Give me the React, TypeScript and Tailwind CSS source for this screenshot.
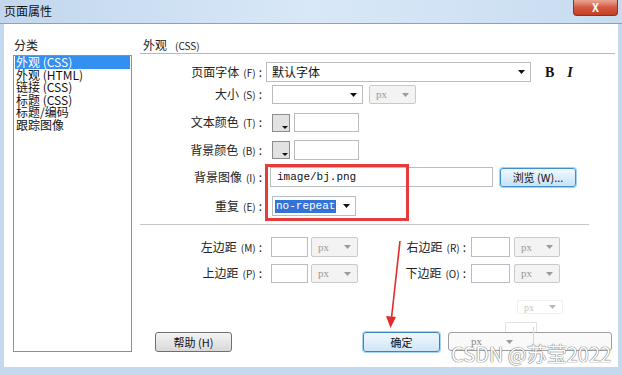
import React from 'react';

const Arrow = ({ muted }: { muted?: boolean }) => (
  <svg width="7" height="4" viewBox="0 0 7 4" className="shrink-0">
    <polygon points="0,0 7,0 3.5,4" fill={muted ? '#9a9a9a' : '#111'} />
  </svg>
);

const Label = ({ text, hint, className = 'w-[125px]' }: { text: string; hint: string; className?: string }) => (
  <div className={`${className} shrink-0 pr-[3px] text-right text-[12px] leading-[14px] text-[#222] whitespace-nowrap`}>
    {text}
    <span className="ml-[4px] text-[10px]">({hint})</span>
    <span className="ml-[3px]">:</span>
  </div>
);

const PxSelect = ({ className }: { className: string }) => (
  <div className={`${className} h-full shrink-0 flex items-center justify-between pl-[6px] pr-[6px] rounded-[2px] border border-[#c9c9c9] bg-[#f3f3f3]`}>
    <span className="[font-family:'Liberation_Serif',serif] text-[11px] text-[#9a9a9a]">px</span>
    <Arrow muted />
  </div>
);

const Input = ({ className, children }: { className: string; children?: React.ReactNode }) => (
  <div className={`${className} h-full shrink-0 border border-[#b9bcc1] bg-white flex items-center`}>{children}</div>
);

const Swatch = () => (
  <div className="ml-[7px] w-[18px] h-[18px] shrink-0 relative border border-[#8c8c8c] bg-[#e2e2e2]">
    <div className="absolute right-[1px] bottom-[2px] w-0 h-0 border-l-[3px] border-r-[3px] border-t-[3px] border-l-transparent border-r-transparent border-t-[#111]" />
  </div>
);

const categories = ['外观 (CSS)', '外观 (HTML)', '链接 (CSS)', '标题 (CSS)', '标题/编码', '跟踪图像'];

export default function App() {
  return (
    <div className="w-[622px] h-[375px] relative overflow-hidden flex flex-col bg-[#c5d9ee] [font-family:'Noto_Sans_CJK_SC',sans-serif]">
      {/* title bar */}
      <div className="h-[24px] shrink-0 flex justify-between border-b border-[#8aa2bb] bg-linear-to-r from-[#c2d7ed] via-[#d8e8f8] to-[#c8dcf0]">
        <div className="pl-[4px] pt-[4px] text-[12px] leading-[14px] text-[#111]">页面属性</div>
        <div className="mr-[4px] w-[45px] h-[16px] flex items-center justify-center rounded-b-[4px] border border-t-0 border-[#8e3024] bg-linear-to-b from-[#e9a596] via-[#d35a40] to-[#c43d24]">
          <span className="text-[11px] leading-[11px] font-bold text-white">X</span>
        </div>
      </div>

      {/* body */}
      <div className="flex-1 ml-[4px] mr-[4px] mb-[8px] bg-white flex">
        {/* categories */}
        <div className="pl-[9px] w-[136px] shrink-0 flex flex-col">
          <div className="pt-[14px] pl-[1px] text-[12px] leading-[14px] text-[#222]">分类</div>
          <div className="mt-[3px] w-[119px] h-[297px] border border-[#8d9196] px-[1px]">
            {categories.map((c, i) => (
              <div
                key={c}
                className={`h-[12.6px] pl-[1px] text-[12px] leading-[12.6px] whitespace-nowrap ${i === 0 ? 'bg-[#3390f0] text-white' : 'text-[#111]'}`}
              >
                {c}
              </div>
            ))}
          </div>
        </div>

        {/* form */}
        <div className="flex-1 flex flex-col pr-[3px]">
          <div className="h-[30px] shrink-0 pt-[14px] pl-[3px] border-b border-[#b7b7b7] text-[12px] leading-[14px] text-[#222]">
            外观<span className="ml-[8px] text-[10px]">(CSS)</span>
          </div>

          {/* page font */}
          <div className="mt-[8px] h-[20px] flex items-center">
            <Label text="页面字体" hint="F" />
            <div className="ml-[1px] w-[265px] h-full flex items-center justify-between pl-[5px] pr-[5px] border border-[#b9bcc1] bg-white">
              <span className="text-[12px] text-[#111]">默认字体</span>
              <Arrow />
            </div>
            <span className="ml-[14px] [font-family:'Liberation_Serif',serif] text-[14px] font-bold text-[#111]">B</span>
            <span className="ml-[13px] [font-family:'Liberation_Serif',serif] text-[14px] font-bold italic text-[#111]">I</span>
          </div>

          {/* size */}
          <div className="mt-[3px] h-[19px] flex items-center">
            <Label text="大小" hint="S" />
            <div className="ml-[7px] w-[91px] h-full flex items-center justify-end pr-[5px] border border-[#b9bcc1] bg-white">
              <Arrow />
            </div>
            <PxSelect className="ml-[6px] w-[47px]" />
          </div>

          {/* text colour */}
          <div className="mt-[9px] h-[19px] flex items-center">
            <Label text="文本颜色" hint="T" />
            <Swatch />
            <Input className="ml-[4px] w-[65px]" />
          </div>

          {/* background colour */}
          <div className="mt-[8px] h-[20px] flex items-center">
            <Label text="背景颜色" hint="B" />
            <Swatch />
            <Input className="ml-[4px] w-[65px]" />
          </div>

          {/* background image */}
          <div className="mt-[7px] h-[20px] flex items-center">
            <Label text="背景图像" hint="I" />
            <Input className="ml-[5px] w-[223px]">
              <span className="pl-[6px] [font-family:'Liberation_Mono',monospace] text-[11px] text-[#111]">image/bj.png</span>
            </Input>
            <div className="ml-[7px] w-[76px] h-[19px] flex items-center justify-center rounded-[3px] border border-[#3d8fd0] bg-linear-to-b from-[#f1f8fd] to-[#c6e2f7] shadow-[0_0_0_1px_#9fd3f5] text-[11px] text-[#111]">
              浏览 (W)...
            </div>
          </div>

          {/* repeat */}
          <div className="mt-[9px] h-[20px] flex items-center">
            <Label text="重复" hint="E" />
            <div className="ml-[7px] w-[84px] h-full flex items-center justify-between pl-[2px] pr-[5px] border border-[#b9bcc1] bg-white">
              <span className="bg-[#3373d6] px-[1px] [font-family:'Liberation_Mono',monospace] text-[11px] leading-[13px] text-white">no-repeat</span>
              <Arrow />
            </div>
          </div>

          <div className="mt-[8px] w-[449px] border-t border-[#c6c6c6]" />

          {/* left / right margin */}
          <div className="mt-[12px] h-[20px] flex items-center">
            <Label text="左边距" hint="M" />
            <Input className="ml-[6px] w-[37px]" />
            <PxSelect className="ml-[3px] w-[47px]" />
            <Label text="右边距" hint="R" className="ml-[43px] w-[68px]" />
            <Input className="ml-[2px] w-[39px]" />
            <PxSelect className="ml-[4px] w-[46px]" />
          </div>

          {/* top / bottom margin */}
          <div className="mt-[7px] h-[19px] flex items-center">
            <Label text="上边距" hint="P" />
            <Input className="ml-[6px] w-[37px]" />
            <PxSelect className="ml-[3px] w-[47px]" />
            <Label text="下边距" hint="O" className="ml-[43px] w-[68px]" />
            <Input className="ml-[2px] w-[39px]" />
            <PxSelect className="ml-[4px] w-[46px]" />
          </div>

          {/* buttons */}
          <div className="mt-[49px] h-[20px] flex items-center">
            <div className="ml-[15px] w-[77px] h-full flex items-center justify-center rounded-[3px] border border-[#707070] bg-linear-to-b from-[#f4f4f4] to-[#d9d9d9] text-[11px] text-[#111]">
              帮助 (H)
            </div>
            <div className="ml-[131px] w-[77px] h-full flex items-center justify-center rounded-[3px] border border-[#3c83c2] bg-linear-to-b from-[#f0f7fc] to-[#cfe6f7] shadow-[0_0_0_1px_#a6d6f4] text-[11px] text-[#111]">
              确定
            </div>
          </div>
        </div>
      </div>

      {/* ghost artifacts at the lower right */}
      <div className="absolute left-[517px] top-[300px] w-[46px] h-[14px] flex items-center justify-between px-[6px] border border-[#ececec] opacity-70">
        <span className="[font-family:'Liberation_Serif',serif] text-[10px] text-[#aaa]">px</span>
        <Arrow muted />
      </div>
      <div className="absolute left-[505px] top-[322px] w-[32px] h-[11px] border border-[#e2e2e2] border-b-0" />
      <div className="absolute left-[448px] top-[332px] w-[164px] h-[19px] flex items-center rounded-[3px] border border-[#9e9e9e] bg-[#f9f9f9]">
        <span className="ml-[22px] [font-family:'Liberation_Serif',serif] text-[11px] text-[#888]">px</span>
        <span className="ml-[24px]"><Arrow muted /></span>
        <div className="ml-[20px] h-[24px] -mt-[6px] border-l border-[#d8d8d8]" />
      </div>

      {/* red highlight box */}
      <div className="absolute left-[265px] top-[164px] w-[144px] h-[57px] border-[3px] border-[#e63b3b]" />

      {/* red arrow */}
      <svg className="absolute left-0 top-0" width="622" height="375" viewBox="0 0 622 375">
        <line x1="400" y1="241" x2="391.5" y2="318" stroke="#e52a2a" strokeWidth="1.6" />
        <polygon points="386,316 396,317 390.5,328" fill="#e52a2a" />
      </svg>

      {/* watermark */}
      <div className="absolute left-[451px] top-[341px] text-[20px] leading-[26px] text-white [text-shadow:0_0_1px_#555,0_0_1px_#555]">
        CSDN @苏莹2022
      </div>
    </div>
  );
}
